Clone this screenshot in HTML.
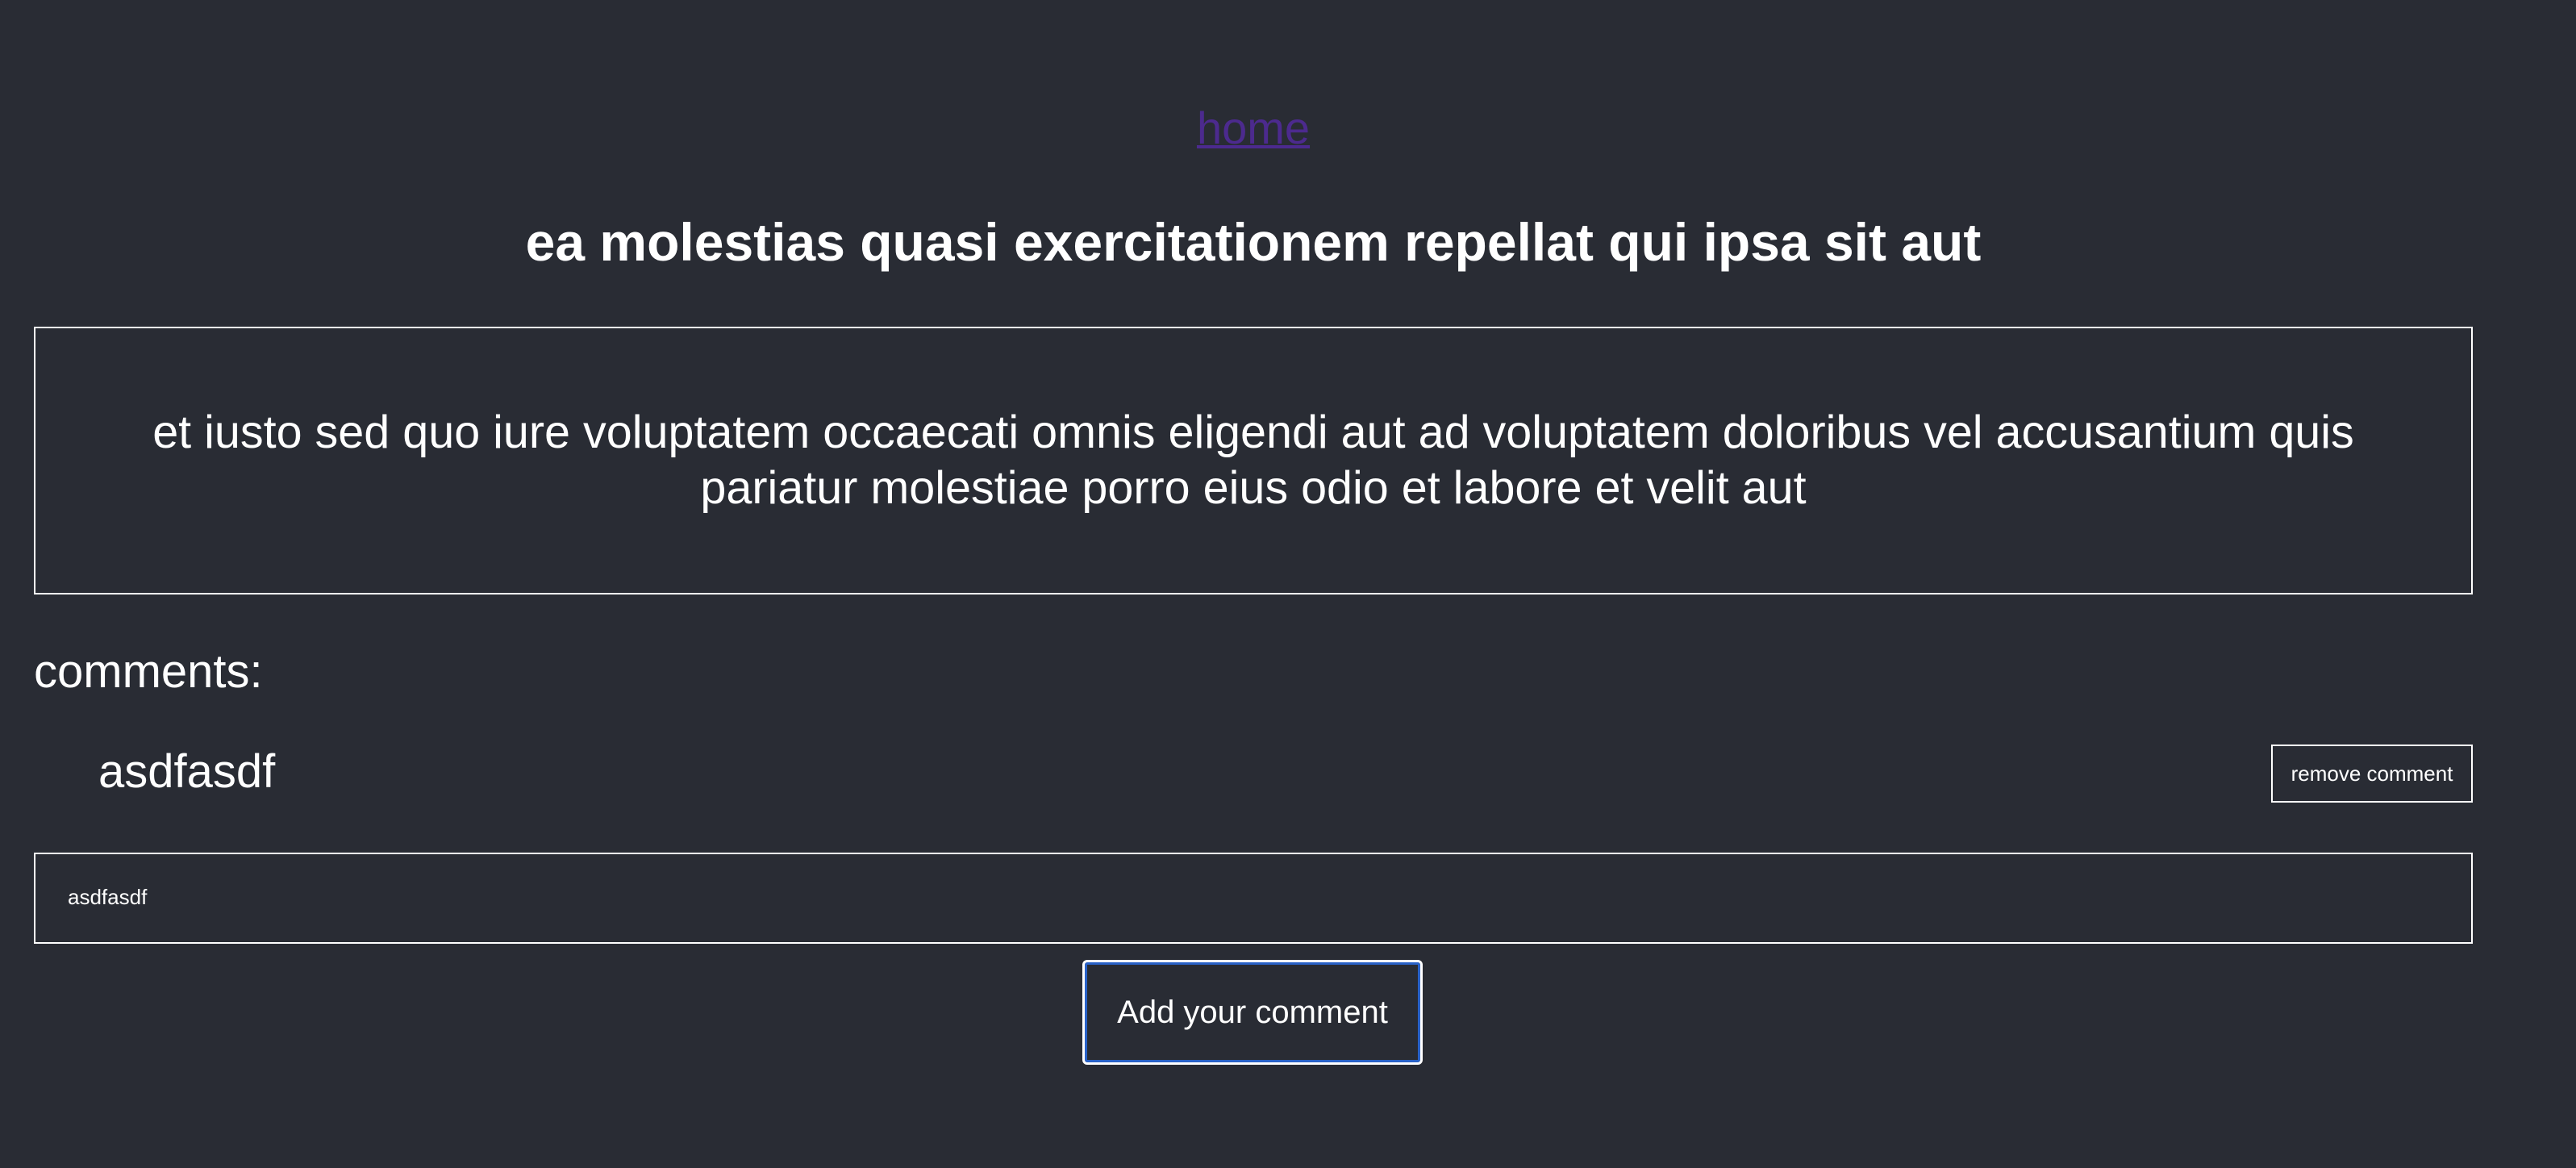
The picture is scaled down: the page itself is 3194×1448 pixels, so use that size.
<!DOCTYPE html>
<html><head><meta charset="utf-8"><style>
html,body{margin:0;padding:0;background:#292c34;width:3194px;height:1448px;overflow:hidden;font-family:"Liberation Sans",Arial,sans-serif;color:#fff}
.a{position:absolute;white-space:nowrap}
.c{left:42px;width:3024px;text-align:center}
</style></head><body>
<div class="a c" style="top:119px;height:80px;line-height:80px;font-size:56px"><a style="color:#4c2a8e;text-decoration:underline;text-decoration-thickness:4px">home</a></div>
<div class="a c" style="top:260px;height:80px;line-height:80px;font-size:66px;font-weight:bold">ea molestias quasi exercitationem repellat qui ipsa sit aut</div>
<div class="a" style="left:42px;top:405px;width:3020px;height:328px;border:2px solid #fff"></div>
<div class="a c" style="top:502px;line-height:69px;font-size:57.5px">et iusto sed quo iure voluptatem occaecati omnis eligendi aut ad voluptatem doloribus vel accusantium quis<br>pariatur molestiae porro eius odio et labore et velit aut</div>
<div class="a" style="left:42px;top:798px;line-height:70px;font-size:58px">comments:</div>
<div class="a" style="left:122px;top:922px;line-height:70px;font-size:58px">asdfasdf</div>
<div class="a" style="left:2816px;top:923px;width:246px;height:68px;border:2px solid #fff;line-height:68px;text-align:center;font-size:26px">remove comment</div>
<div class="a" style="left:42px;top:1057px;width:3020px;height:109px;border:2px solid #fff"></div>
<div class="a" style="left:84px;top:1092px;line-height:40px;font-size:26px">asdfasdf</div>
<div class="a" style="left:1342px;top:1190px;width:416px;height:124px;border:3px solid #fff;border-radius:6px;box-shadow:inset 0 0 0 3px #2962c8;line-height:124px;text-align:center;font-size:40px">Add your comment</div>
</body></html>
